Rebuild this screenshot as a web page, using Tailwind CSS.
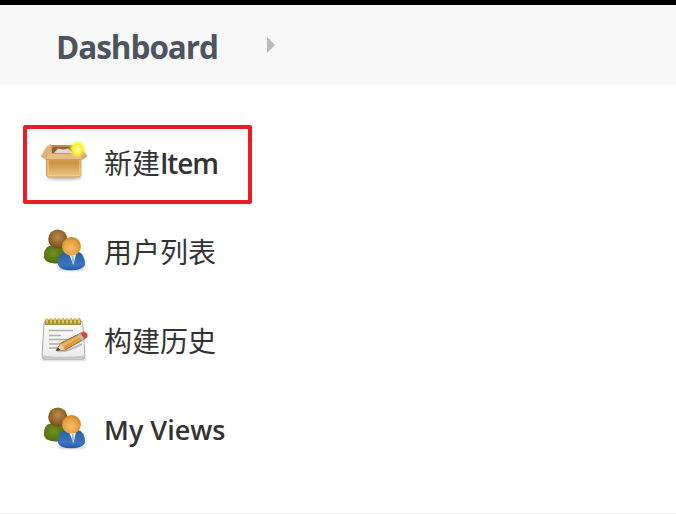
<!DOCTYPE html>
<html lang="zh-CN">
<head>
<meta charset="utf-8">
<title>Dashboard</title>
<script src="https://cdn.jsdelivr.net/npm/@tailwindcss/browser@4"></script>
</head>
<body class="bg-white font-['Open_Sans','Noto_Sans_CJK_SC',sans-serif] text-[#333]">
<svg width="0" height="0" class="absolute">
  <defs>
    <filter id="soft" x="-10%" y="-10%" width="120%" height="120%"><feGaussianBlur stdDeviation="0.66"/></filter>
    <filter id="shade" x="-20%" y="-100%" width="140%" height="300%"><feGaussianBlur stdDeviation="1.2"/></filter>
    <linearGradient id="box" x2="0" y2="1"><stop stop-color="#dcaa65"/><stop offset=".4" stop-color="#cf9442"/><stop offset="1" stop-color="#efc78a"/></linearGradient>
    <radialGradient id="star"><stop stop-color="#fffde0"/><stop offset=".3" stop-color="#fff66b"/><stop offset=".6" stop-color="#fbf02c"/><stop offset="1" stop-color="#fff43a" stop-opacity=".15"/></radialGradient>
    <radialGradient id="brown" cx=".5" cy=".4" r=".65"><stop stop-color="#b98c52"/><stop offset=".6" stop-color="#946329"/><stop offset="1" stop-color="#70460f"/></radialGradient>
    <radialGradient id="orange" cx=".45" cy=".6" r=".7"><stop stop-color="#f8bd66"/><stop offset=".6" stop-color="#e5a043"/><stop offset="1" stop-color="#b87014"/></radialGradient>
    <radialGradient id="green" cx=".4" cy=".45" r=".7"><stop stop-color="#6f8f26"/><stop offset="1" stop-color="#486400"/></radialGradient>
    <linearGradient id="blue" x2="0" y2="1"><stop stop-color="#2760a6"/><stop offset=".7" stop-color="#3c76bd"/><stop offset="1" stop-color="#2458a0"/></linearGradient>
    <linearGradient id="paper" x2="0" y2="1"><stop stop-color="#fcfcfc"/><stop offset="1" stop-color="#ececec"/></linearGradient>
    <symbol id="users" viewBox="0 0 48 48">
      <ellipse cx="31" cy="42" rx="14" ry="2" fill="#777" opacity=".35" filter="url(#shade)"/>
      <g filter="url(#soft)">
        <path d="M4 29Q3.500 18 14 18H20Q28 20 27 34Q23 37 15 36.500Q4 35.500 4 30Z" fill="url(#green)"/>
        <circle cx="17.800" cy="12" r="9.600" fill="url(#brown)"/>
        <path d="M18 38Q17 26 27 24.500H37Q45 26 45.200 38Q42 43.300 31 43.300Q20 43.300 18 38Z" fill="url(#blue)"/>
        <path d="M29 27H36L33.500 38Z" fill="#f2f7fb"/>
        <path d="M32 29H33.500L34 34L33 38L32 35Z" fill="#9bbadb"/>
        <circle cx="31.500" cy="19.400" r="9.400" fill="url(#orange)"/>
      </g>
    </symbol>
  </defs>
</svg>
<div class="flex h-[514px] w-[676px] flex-col overflow-hidden border-b border-[#ebebeb]">
  <header class="flex h-[85px] shrink-0 items-center border-t-[5px] border-black bg-[#f8f8f8] pl-14">
    <a class="w-[210px] pt-[3px] text-[31.500px] leading-none font-bold tracking-[-1.05px] text-[#4d545d]">Dashboard</a>
    <svg class="h-4 w-[9px]" viewBox="0 0 9 16"><path d="M1 0L9 8L1 16Z" fill="#bababa"/></svg>
  </header>
  <nav class="flex flex-col pt-[33px] pl-10 text-[28px] leading-10">
    <a class="relative flex h-[89px] items-center gap-4">
      <svg class="mb-[3px] size-12" viewBox="0 0 48 48">
        <ellipse cx="24" cy="41" rx="18" ry="1.800" fill="#555" opacity=".4" filter="url(#shade)"/>
        <g filter="url(#soft)">
          <path d="M11 8H36L41 18H7Z" fill="#c58b45"/>
          <path d="M13 10H34L38 17H10Z" fill="#8c6535"/>
          <path d="M14 16L18 11.500L23 12.500L28 11.500L33 16Z" fill="#dedad0"/>
          <path d="M11 7L7 9L0.500 19.500L6 23L12 16Z" fill="#dfb57c"/>
          <path d="M36 7L41 9L47.500 19.500L42 23L36 16Z" fill="#d7a96c"/>
          <path d="M6.500 17H41V37.500Q41 40 38.500 40H9Q6.500 40 6.500 37.500Z" fill="url(#box)" stroke="#c58d48" stroke-width=".8"/>
          <path d="M7 16.500H41L42 22H6Z" fill="#e6bd85"/>
          <path d="M8 23V37Q8 38.700 10 38.700H38Q40 38.700 40 37V23" fill="none" stroke="#f1cf9a" stroke-width="1"/>
        </g>
        <circle cx="37.500" cy="12" r="8.500" fill="url(#star)"/>
      </svg>
      <span>新建<span class="font-semibold tracking-[-1.2px]">Item</span></span>
      <span class="absolute top-[7px] -left-[17px] h-[79px] w-[229px] rounded-[2px] border-4 border-[#ed1c24]"></span>
    </a>
    <a class="flex h-[89px] items-center gap-4">
      <svg class="mb-px size-12"><use href="#users"/></svg>
      <span>用户列表</span>
    </a>
    <a class="flex h-[89px] items-center gap-4">
      <svg class="mb-px size-12" viewBox="0 0 48 48">
        <path d="M2 42H46V44.500H2Z" fill="#777" opacity=".4" filter="url(#shade)"/>
        <g filter="url(#soft)">
          <path d="M6 5H40Q42.500 5 42.800 8L45 40Q45 43 42 43H5Q2 43 2 40L4 8Q4 5 6 5Z" fill="url(#paper)" stroke="#a8a8a8"/>
          <path d="M3 39.500Q23 42 44 39.500V42H3Z" fill="#c9c9c9"/>
          <path d="M5 3.500H41V9H5Z" fill="#a08c3a"/>
          <path d="M7 2V7.500M11 2V7.500M15 2V7.500M19 2V7.500M23 2V7.500M27 2V7.500M31 2V7.500M35 2V7.500M39 2V7.500" stroke="#d9c655" stroke-width="2.200"/>
          <path d="M9 14.500H33M9 19.500H21M9 23.500H30M9 28H20M9 32H24" stroke="#b0b0b0" stroke-width="1.700"/>
          <path d="M17 35Q25 37 42 28" fill="none" stroke="#888" stroke-width="2" opacity=".5"/>
          <path d="M16 34.500L21 27L41 17L44.500 23L25 34Z" fill="#d99b45" stroke="#9a6d2f" stroke-width="1"/>
          <path d="M22 28.500L41 18.500L42 20L23 30.500Z" fill="#f1b95b"/>
          <path d="M16.500 34.500L21 27.500L25 34Z" fill="#e8cf9f"/>
          <path d="M16 35L18 31.500L20.500 34Z" fill="#423b31"/>
          <path d="M38 18.500L41 17L44.500 23L41.500 24.800Z" fill="#b9b9b4"/>
          <path d="M40.500 17Q44 14.500 47 17.500Q49 21 44.500 23Z" fill="#dc4040"/>
        </g>
      </svg>
      <span>构建历史</span>
    </a>
    <a class="flex h-[89px] items-center gap-4">
      <svg class="mb-px size-12"><use href="#users"/></svg>
      <span class="text-[27px] font-semibold">My Views</span>
    </a>
  </nav>
</div>
</body>
</html>
